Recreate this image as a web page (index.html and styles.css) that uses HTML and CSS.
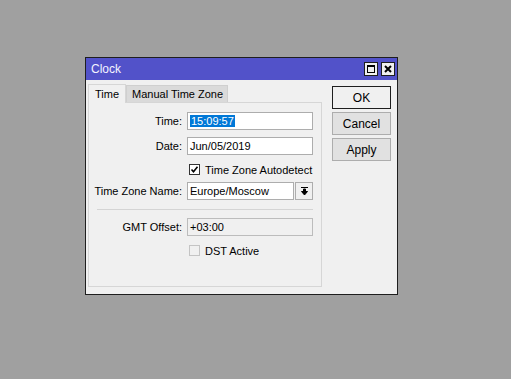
FILE: index.html
```html
<!DOCTYPE html>
<html lang="en">
<head>
    <meta charset="UTF-8">
    <title>Clock</title>
    <link rel="stylesheet" href="styles.css">
</head>
<body>
    <div class="window">
        <div class="titlebar">
            <span class="title">Clock</span>
            <div class="title-buttons">
                <span class="tbtn"><span class="max-box"></span></span>
                <span class="tbtn">
                    <svg width="8" height="8" viewBox="0 0 8 8"><path d="M1 1 L7 7 M7 1 L1 7" stroke="#000" stroke-width="2"/></svg>
                </span>
            </div>
        </div>

        <div class="body">
            <div class="tabs-area">
                <div class="tab-strip">
                    <div class="tab active">Time</div>
                    <div class="tab">Manual Time Zone</div>
                </div>
                <div class="panel">
                    <div class="row">
                        <label>Time:</label>
                        <div class="field"><span class="selected">15:09:57</span></div>
                    </div>
                    <div class="row">
                        <label>Date:</label>
                        <div class="field">Jun/05/2019</div>
                    </div>
                    <div class="row check-row">
                        <label></label>
                        <div class="check">
                            <span class="box">
                                <svg width="9" height="9" viewBox="0 0 9 9"><path d="M1.5 4.5 L3.5 6.8 L7.5 1.8" stroke="#000" stroke-width="1.6" fill="none"/></svg>
                            </span>
                            Time Zone Autodetect
                        </div>
                    </div>
                    <div class="row select-row">
                        <label>Time Zone Name:</label>
                        <div class="select">
                            <div class="field">Europe/Moscow</div>
                            <span class="drop">
                                <svg width="9" height="9" viewBox="0 0 9 9"><path d="M1 0.5 H8 M3.5 2 V4.5 H5.5 V2 Z M1.5 4.5 H7.5 L4.5 8 Z" stroke="#000" stroke-width="1" fill="#000"/></svg>
                            </span>
                        </div>
                    </div>
                    <div class="separator"></div>
                    <div class="row">
                        <label>GMT Offset:</label>
                        <div class="field readonly">+03:00</div>
                    </div>
                    <div class="row check-row">
                        <label></label>
                        <div class="check disabled">
                            <span class="box"></span>
                            DST Active
                        </div>
                    </div>
                </div>
            </div>

            <div class="buttons">
                <button class="default">OK</button>
                <button>Cancel</button>
                <button>Apply</button>
            </div>
        </div>
    </div>
</body>
</html>
```

FILE: styles.css
```css
body {
    margin: 0;
    background-color: #a0a0a0;
    font-family: 'Liberation Sans', Arial, sans-serif;
    font-size: 11px;
    color: #000;
}

.window {
    position: absolute;
    left: 85px;
    top: 57px;
    width: 313px;
    height: 238px;
    box-sizing: border-box;
    border: 1px solid #1e1e1e;
    background-color: #f0f0f0;
    display: flex;
    flex-direction: column;
}

.titlebar {
    height: 22px;
    background-color: #5252c9;
    display: flex;
    align-items: center;
    justify-content: space-between;
    padding: 0 2px 0 5px;
}

.title {
    color: #f4f4ff;
    font-size: 12px;
}

.title-buttons {
    display: flex;
    gap: 3px;
}

.tbtn {
    width: 14px;
    height: 14px;
    box-sizing: border-box;
    border: 1px solid #1e1e1e;
    background-color: #f0f0f0;
    display: flex;
    align-items: center;
    justify-content: center;
}

.max-box {
    width: 8px;
    height: 8px;
    box-sizing: border-box;
    border: 1px solid #000;
    border-top-width: 2px;
}

.body {
    flex: 1;
    display: flex;
    gap: 10px;
    padding: 3px 5px 7px 2px;
}

.tabs-area {
    width: 234px;
    display: flex;
    flex-direction: column;
}

.tab-strip {
    display: flex;
    align-items: flex-end;
    height: 19px;
}

.tab {
    height: 17px;
    box-sizing: border-box;
    padding: 0 4px 0 5px;
    display: flex;
    align-items: center;
    background-color: #dadada;
    border: 1px solid #cfcfcf;
    border-bottom: none;
    white-space: nowrap;
}

.tab.active {
    height: 19px;
    width: 38px;
    justify-content: center;
    padding: 0;
    background-color: #f0f0f0;
    border-color: #d6d6d6;
    margin-bottom: -1px;
    position: relative;
}

.panel {
    flex: 1;
    border: 1px solid #d6d6d6;
    padding: 9px 0 0 0;
    display: flex;
    flex-direction: column;
}

.row {
    display: grid;
    grid-template-columns: 93px 126px;
    column-gap: 5px;
    align-items: center;
    height: 18px;
    margin-bottom: 7px;
}

.row label {
    text-align: right;
    white-space: nowrap;
}

.check-row {
    height: 13px;
    margin-top: 1px;
    margin-bottom: 6px;
}

.field {
    height: 18px;
    box-sizing: border-box;
    border: 1px solid #adadad;
    background-color: #fff;
    padding: 0 2px;
    display: flex;
    align-items: center;
    white-space: nowrap;
}

.field.readonly {
    background-color: #f0f0f0;
    border-color: #bcbcbc;
}

.selected {
    background-color: #0078d7;
    color: #fff;
    padding: 0 1px;
}

.check {
    display: flex;
    align-items: center;
    gap: 5px;
    padding-left: 2px;
    white-space: nowrap;
}

.box {
    width: 11px;
    height: 11px;
    box-sizing: border-box;
    border: 1px solid #333;
    background-color: #fff;
    display: flex;
    align-items: center;
    justify-content: center;
}

.check.disabled .box {
    border-color: #c4c4c4;
    background-color: #f0f0f0;
}

.select {
    display: flex;
    gap: 1px;
}

.select .field {
    flex: 1;
}

.drop {
    width: 18px;
    height: 18px;
    box-sizing: border-box;
    border: 1px solid #adadad;
    background-color: #f0f0f0;
    display: flex;
    align-items: center;
    justify-content: center;
}

.separator {
    height: 1px;
    background-color: #d4d4d4;
    margin: 2px 8px 8px 8px;
    width: 216px;
}

.buttons {
    display: flex;
    flex-direction: column;
    gap: 3px;
    padding-top: 3px;
}

button {
    width: 59px;
    height: 23px;
    box-sizing: border-box;
    border: 1px solid #adadad;
    background-color: #e1e1e1;
    font-family: inherit;
    font-size: 12px;
    color: #000;
    padding: 0;
}

button.default {
    border: 1px solid #1e1e1e;
    background-color: #f0f0f0;
}
```
